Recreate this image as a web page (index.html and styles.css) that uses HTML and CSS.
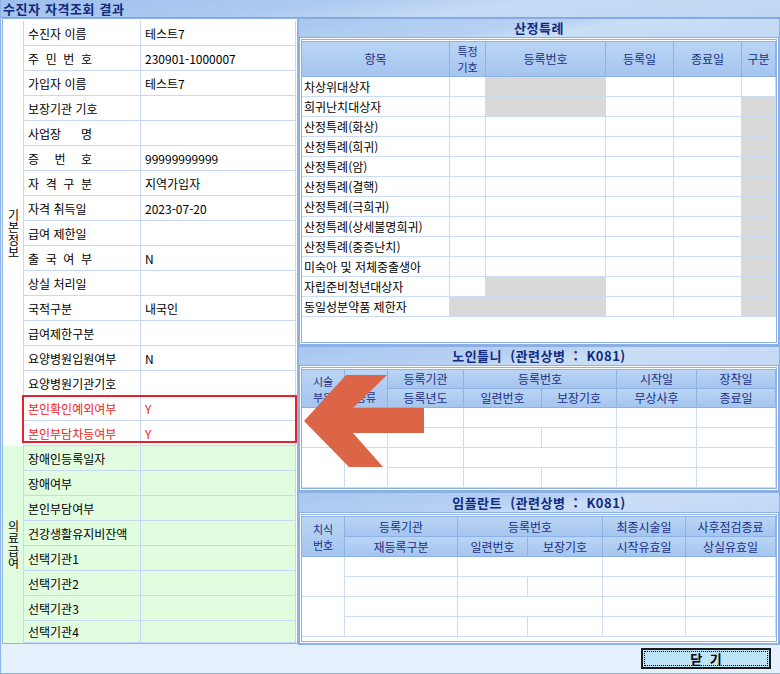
FILE: index.html
```html
<!DOCTYPE html>
<html lang="ko">
<head>
<meta charset="utf-8">
<title>수진자 자격조회 결과</title>
<link rel="stylesheet" href="styles.css">
</head>
<body>
<div class="win">
  <header class="titlebar">수진자 자격조회 결과</header>
  <div class="main">
    <div class="left">
      <div class="lgrid">
        <div class="grp grp-basic"><span class="vtext">기본정보</span></div>
        <div class="grp grp-med"><span class="vtext">의료급여</span></div>

        <div class="lab">수진자 이름</div><div class="val">테스트7</div>
        <div class="lab"><span class="jt">주 민 번 호</span></div><div class="val">230901-1000007</div>
        <div class="lab">가입자 이름</div><div class="val">테스트7</div>
        <div class="lab">보장기관 기호</div><div class="val"></div>
        <div class="lab"><span class="jt">사업장 명</span></div><div class="val"></div>
        <div class="lab"><span class="jt">증 번 호</span></div><div class="val">99999999999</div>
        <div class="lab"><span class="jt">자 격 구 분</span></div><div class="val">지역가입자</div>
        <div class="lab">자격 취득일</div><div class="val">2023-07-20</div>
        <div class="lab">급여 제한일</div><div class="val"></div>
        <div class="lab"><span class="jt">출 국 여 부</span></div><div class="val">N</div>
        <div class="lab">상실 처리일</div><div class="val"></div>
        <div class="lab">국적구분</div><div class="val">내국인</div>
        <div class="lab">급여제한구분</div><div class="val"></div>
        <div class="lab">요양병원입원여부</div><div class="val">N</div>
        <div class="lab">요양병원기관기호</div><div class="val"></div>
        <div class="lab red">본인확인예외여부</div><div class="val red">Y</div>
        <div class="lab red">본인부담차등여부</div><div class="val red">Y</div>

        <div class="lab g">장애인등록일자</div><div class="val g"></div>
        <div class="lab g">장애여부</div><div class="val g"></div>
        <div class="lab g">본인부담여부</div><div class="val g"></div>
        <div class="lab g">건강생활유지비잔액</div><div class="val g"></div>
        <div class="lab g">선택기관1</div><div class="val g"></div>
        <div class="lab g">선택기관2</div><div class="val g"></div>
        <div class="lab g">선택기관3</div><div class="val g"></div>
        <div class="lab g">선택기관4</div><div class="val g"></div>
      </div>
    </div>

    <div class="right">
      <section class="sec sec1">
        <div class="band">산정특례</div>
        <div class="frame">
          <div class="grid g1">
            <div class="h">항목</div><div class="h two">특정<br>기호</div><div class="h">등록번호</div><div class="h">등록일</div><div class="h">종료일</div><div class="h">구분</div>

            <div class="d">차상위대상자</div><div class="d"></div><div class="d gr"></div><div class="d"></div><div class="d"></div><div class="d"></div>
            <div class="d">희귀난치대상자</div><div class="d"></div><div class="d gr"></div><div class="d"></div><div class="d"></div><div class="d gr"></div>
            <div class="d">산정특례(화상)</div><div class="d"></div><div class="d"></div><div class="d"></div><div class="d"></div><div class="d gr"></div>
            <div class="d">산정특례(희귀)</div><div class="d"></div><div class="d"></div><div class="d"></div><div class="d"></div><div class="d gr"></div>
            <div class="d">산정특례(암)</div><div class="d"></div><div class="d"></div><div class="d"></div><div class="d"></div><div class="d gr"></div>
            <div class="d">산정특례(결핵)</div><div class="d"></div><div class="d"></div><div class="d"></div><div class="d"></div><div class="d gr"></div>
            <div class="d">산정특례(극희귀)</div><div class="d"></div><div class="d"></div><div class="d"></div><div class="d"></div><div class="d gr"></div>
            <div class="d">산정특례(상세불명희귀)</div><div class="d"></div><div class="d"></div><div class="d"></div><div class="d"></div><div class="d gr"></div>
            <div class="d">산정특례(중증난치)</div><div class="d"></div><div class="d"></div><div class="d"></div><div class="d"></div><div class="d gr"></div>
            <div class="d">미숙아 및 저체중출생아</div><div class="d"></div><div class="d"></div><div class="d"></div><div class="d"></div><div class="d gr"></div>
            <div class="d">자립준비청년대상자</div><div class="d"></div><div class="d gr"></div><div class="d"></div><div class="d"></div><div class="d gr"></div>
            <div class="d">동일성분약품 제한자</div><div class="d gr"></div><div class="d gr"></div><div class="d"></div><div class="d"></div><div class="d gr"></div>
          </div>
        </div>
      </section>

      <section class="sec sec2">
        <div class="band">노인틀니 (관련상병 : K081)</div>
        <div class="frame">
          <div class="grid g2">
            <div class="h r2 two">시술<br>부위</div><div class="h r2 two">보철<br>종류</div><div class="h">등록기관</div><div class="h c2">등록번호</div><div class="h">시작일</div><div class="h">장착일</div>
            <div class="h">등록년도</div><div class="h">일련번호</div><div class="h">보장기호</div><div class="h">무상사후</div><div class="h">종료일</div>

            <div class="d r2"></div><div class="d r2"></div><div class="d"></div><div class="d c2"></div><div class="d"></div><div class="d"></div>
            <div class="d"></div><div class="d"></div><div class="d"></div><div class="d"></div><div class="d"></div>
            <div class="d r2"></div><div class="d r2"></div><div class="d"></div><div class="d c2"></div><div class="d"></div><div class="d"></div>
            <div class="d"></div><div class="d"></div><div class="d"></div><div class="d"></div><div class="d"></div>
          </div>
        </div>
      </section>

      <section class="sec sec3">
        <div class="band">임플란트 (관련상병 : K081)</div>
        <div class="frame">
          <div class="grid g3">
            <div class="h r2 two">치식<br>번호</div><div class="h">등록기관</div><div class="h c2">등록번호</div><div class="h">최종시술일</div><div class="h">사후점검종료</div>
            <div class="h">재등록구분</div><div class="h">일련번호</div><div class="h">보장기호</div><div class="h">시작유효일</div><div class="h">상실유효일</div>

            <div class="d r2"></div><div class="d"></div><div class="d c2"></div><div class="d"></div><div class="d"></div>
            <div class="d"></div><div class="d"></div><div class="d"></div><div class="d"></div><div class="d"></div>
            <div class="d r2"></div><div class="d"></div><div class="d c2"></div><div class="d"></div><div class="d"></div>
            <div class="d"></div><div class="d"></div><div class="d"></div><div class="d"></div><div class="d"></div>
          </div>
        </div>
      </section>
    </div>
  </div>

  <footer class="footer"><button class="btn" type="button">닫 기</button></footer>

  <div class="redbox"></div>
  <svg class="arrow" width="130" height="100" viewBox="0 0 130 100">
    <polygon points="4,51 46,5 87,5 53,38 124,38 124,63 53,63 83,97 49,97" fill="#db6546"/>
  </svg>
</div>
</body>
</html>
```

FILE: styles.css
```css
* { box-sizing: border-box; }

html, body { margin: 0; padding: 0; }

body {
  width: 780px;
  height: 674px;
  overflow: hidden;
  background: #e4f0fc;
  font-family: "Noto Sans CJK KR", "Noto Sans", sans-serif;
  font-size: 12px;
  color: #000;
}

.win {
  position: relative;
  width: 780px;
  height: 674px;
  border-left: 1px solid #8db2e6;
  border-bottom: 1px solid #8db2e6;
  display: flex;
  flex-direction: column;
}

.titlebar {
  height: 18px;
  flex: none;
  border-bottom: 1px solid #7ea5dc;
  background: linear-gradient(172deg, #9ec0ed 0%, #aecbf1 40%, #c6dbf5 60%, #c0d7f4 100%);
  color: #14297a;
  font-weight: 700;
  font-size: 13px;
  line-height: 17px;
  letter-spacing: 0.6px;
  padding-left: 2px;
  white-space: nowrap;
}

.main {
  display: flex;
  height: 627px;
  flex: none;
}

/* ---------- left panel ---------- */
.left {
  margin-left: 1px;
  width: 296px;
  height: 626px;
  border: 1px solid #8fb4e6;
  background: #fff;
  padding-top: 2px;
  flex: none;
}

.lgrid {
  display: grid;
  grid-template-columns: 20px 117px 156px;
  grid-template-rows: repeat(24, 25px) 22px;
}

.lab,
.val {
  border-left: 1px solid #c6d8f3;
  border-bottom: 1px solid #c6d8f3;
  padding-left: 4px;
  display: flex;
  align-items: center;
  white-space: nowrap;
}

.val { border-right: 1px solid #c6d8f3; }

.jt {
  display: inline-block;
  width: 64px;
  text-align: justify;
  text-align-last: justify;
}

.red { color: #ee1c1c; }
.g { background: #e0fde0; }

.grp {
  grid-column: 1;
  display: flex;
  align-items: center;
  justify-content: center;
}

.grp-basic { grid-row: 1 / span 17; }
.grp-med { grid-row: 18 / span 8; background: #e0fde0; }

.vtext {
  writing-mode: vertical-lr;
  text-orientation: upright;
  font-size: 12px;
  line-height: 12px;
  letter-spacing: 0.5px;
}

/* ---------- right column ---------- */
.right {
  width: 482px;
  display: flex;
  flex-direction: column;
  flex: none;
}

.sec {
  border: 1px solid #8cb0e4;
  background: #e8f1fc;
  display: flex;
  flex-direction: column;
}

.sec1 { height: 328px; }
.sec2 { height: 146px; }
.sec3 { height: 153px; }

.band {
  height: 18px;
  flex: none;
  background: linear-gradient(172deg, #a8c7ef 0%, #b7d1f3 45%, #cadef6 58%, #c2d8f4 100%);
  color: #122a80;
  font-weight: 700;
  font-size: 13px;
  line-height: 18px;
  letter-spacing: 0.5px;
  word-spacing: 4px;
  text-align: center;
  white-space: nowrap;
}

.sec3 .band { height: 19px; line-height: 19px; }

.frame {
  flex: 1;
  border: 3px double #8cb0e4;
  padding-top: 1px;
  background: #fff;
}

.grid {
  display: grid;
  border-top: 1px solid #8db3e6;
}

.g1 {
  grid-template-columns: 148px 36px 120px 68px 68px 34px;
  grid-template-rows: 35px repeat(12, 20px);
}

.g2 {
  grid-template-columns: 43px 43px 76px 78px 75px 80px 79px;
  grid-template-rows: 19px 19px repeat(4, 20px);
}

.g3 {
  grid-template-columns: 43px 113px 70px 75px 83px 90px;
  grid-template-rows: 20px 20px repeat(4, 20px);
}

.h {
  background: linear-gradient(#bad5f4, #a5c5ef);
  border-right: 1px solid #8db3e6;
  border-bottom: 1px solid #8db3e6;
  color: #1b2e82;
  display: flex;
  align-items: center;
  justify-content: center;
  text-align: center;
  line-height: 14px;
  white-space: nowrap;
}

.h.two {
  font-size: 11px;
  line-height: 16px;
}

.d {
  border-right: 1px solid #cbdcf5;
  border-bottom: 1px solid #cbdcf5;
  padding-left: 2px;
  display: flex;
  align-items: center;
  white-space: nowrap;
}

.gr { background: #d9d9d9; }

.r2 { grid-row: span 2; }
.c2 { grid-column: span 2; }

/* ---------- footer ---------- */
.footer {
  flex: 1;
  display: flex;
  justify-content: flex-end;
  align-items: flex-start;
  padding-top: 3px;
  padding-right: 9px;
}

.btn {
  width: 130px;
  height: 21px;
  padding: 0;
  border: 2px solid #1a1a1a;
  background: #bfe4f8;
  outline: 1px dotted #000;
  outline-offset: -4px;
  font-family: "Noto Sans CJK KR", sans-serif;
  font-weight: 700;
  font-size: 13px;
  line-height: 15px;
  word-spacing: 4px;
  color: #000;
}

/* ---------- annotations ---------- */
.redbox {
  position: absolute;
  left: 21px;
  top: 395px;
  width: 275px;
  height: 48px;
  border: 2px solid #e8212b;
}

.arrow {
  position: absolute;
  left: 299px;
  top: 370px;
}
```
